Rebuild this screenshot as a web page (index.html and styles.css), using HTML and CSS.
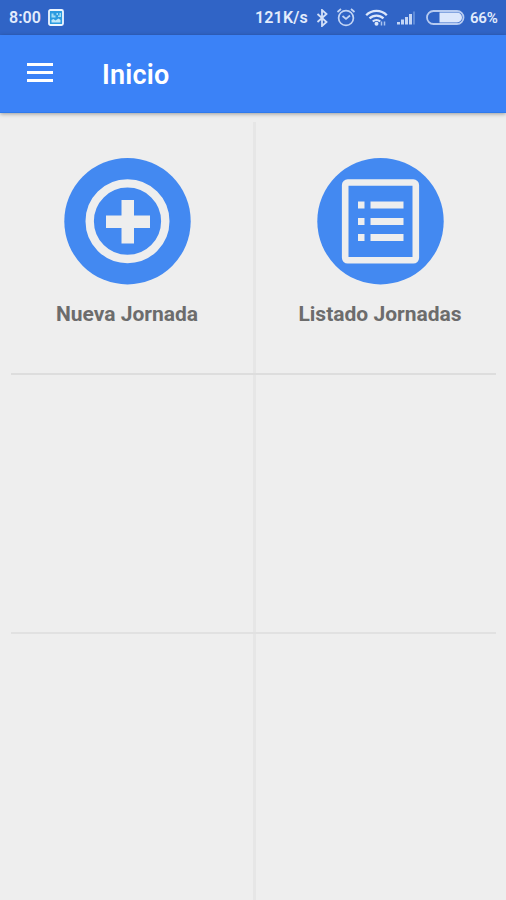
FILE: index.html
```html
<!DOCTYPE html>
<html lang="es">
<head>
  <meta charset="UTF-8">
  <meta name="viewport" content="width=device-width, initial-scale=1.0">
  <title>Inicio</title>
  <link rel="stylesheet" href="styles.css">
</head>
<body>
  <div class="status-bar">
    <span class="time">8:00</span>
    <svg class="photo" width="16" height="17" viewBox="0 0 16 17">
      <rect x="1" y="1" width="14" height="15" rx="1.5" fill="#2b9be0" stroke="#eef6ff" stroke-width="1.8"/>
      <path d="M3.500 4.500h2v2h2v2h-4zM8.500 4h1.500v2h-1.500zM11.500 4h1.500v4h-3v-1.500h1.500z" fill="#9fdcf5"/>
      <path d="M3.500 13.500v-2.500l2-1 2 1.500 3-2 2 1.500v2.500z" fill="#bfe6f8"/>
    </svg>
    <span class="speed">121K/s</span>
    <svg class="bluetooth" width="12" height="18" viewBox="0 0 12 18">
      <path d="M1.500 5l9 8-4.500 4V1l4.500 4-9 8" fill="none" stroke="#d3e0f8" stroke-width="1.800"/>
    </svg>
    <svg class="alarm" width="20" height="20" viewBox="0 0 20 20" fill="none" stroke="#c3d5f5" stroke-width="1.700">
      <circle cx="10" cy="10" r="7.400"/>
      <path d="M6.500 8l3.500 3 4-3.500M1.500 4l3.500-3M18.500 4l-3.500-3"/>
    </svg>
    <svg class="wifi" width="24" height="18" viewBox="0 0 24 18">
      <g fill="none" stroke="#dce7fb" stroke-width="2.300">
        <path d="M1.200 6.200a14.500 14.500 0 0 1 20.600 0"/>
        <path d="M4.500 9.400a10 10 0 0 1 14 0"/>
        <path d="M7.800 12.500a5.500 5.500 0 0 1 7.400 0"/>
      </g>
      <circle cx="11.500" cy="14.800" r="2" fill="#dce7fb"/>
      <path d="M16.500 12.500v4M19.500 12.500v4" stroke="#a9c3f0" stroke-width="1.500"/>
    </svg>
    <svg class="signal" width="19" height="15" viewBox="0 0 19 15" fill="#c3d5f5">
      <rect x="0" y="12" width="3" height="2.500"/>
      <rect x="4" y="9.500" width="3" height="5"/>
      <rect x="8" y="7" width="3" height="7.500"/>
      <rect x="12" y="4" width="3" height="10.500"/>
      <rect x="16" y="1.500" width="2" height="13" fill="#5f8bd8"/>
    </svg>
    <svg class="battery" width="39" height="15" viewBox="0 0 39 15">
      <rect x="1" y="1" width="36.500" height="13" rx="6.500" fill="none" stroke="#b7cbf1" stroke-width="1.800"/>
      <path d="M13.500 2.500H31a5 5 0 0 1 0 10H13.500z" fill="#dce7fc"/>
    </svg>
    <span class="percent">66%</span>
  </div>

  <header class="app-bar">
    <button class="menu" aria-label="Menu">
      <span></span>
      <span></span>
      <span></span>
    </button>
    <h1>Inicio</h1>
  </header>

  <main class="tiles">
    <div class="row first">
      <a class="tile">
        <svg width="127" height="127" viewBox="0 0 127 127">
          <circle cx="63.500" cy="63.200" r="63.200" fill="#4389f1"/>
          <circle cx="63.500" cy="63.200" r="37.800" fill="none" stroke="#eeeeee" stroke-width="8.400"/>
          <path d="M57.500 42h12.500v15.500h16v12.500h-16v15.500h-12.500v-15.500h-15.500v-12.500h15.500z" fill="#eeeeee"/>
        </svg>
        <span>Nueva Jornada</span>
      </a>
      <a class="tile">
        <svg width="127" height="127" viewBox="0 0 127 127">
          <circle cx="63.500" cy="63.200" r="63.200" fill="#4389f1"/>
          <rect x="28.200" y="24.500" width="70.600" height="77.800" rx="2.500" fill="none" stroke="#eeeeee" stroke-width="6.600"/>
          <g fill="#eeeeee">
            <rect x="41" y="43.500" width="6.500" height="7"/>
            <rect x="53.500" y="43.500" width="33" height="7"/>
            <rect x="41" y="60" width="6.500" height="7"/>
            <rect x="53.500" y="60" width="33" height="7"/>
            <rect x="41" y="76" width="6.500" height="7"/>
            <rect x="53.500" y="76" width="33" height="7"/>
          </g>
        </svg>
        <span>Listado Jornadas</span>
      </a>
    </div>
    <div class="row second">
      <div class="tile"></div>
      <div class="tile"></div>
    </div>
    <div class="row last">
      <div class="tile"></div>
      <div class="tile"></div>
    </div>
  </main>
</body>
</html>
```
FILE: styles.css
```css
* {
  box-sizing: border-box;
}
body {
  margin: 0;
  height: 100vh;
  display: flex;
  flex-direction: column;
  overflow: hidden;
  background: #eeeeee;
  font-family: Roboto, sans-serif;
}
.status-bar {
  flex: none;
  display: flex;
  align-items: center;
  height: 35px;
  padding: 0 7px 0 9px;
  background: #3064c6;
  color: #e3ecfc;
  font-size: 16px;
  font-weight: 600;
  white-space: nowrap;
}
.status-bar svg {
  flex: none;
}
.time {
  width: 32px;
}
.photo {
  margin-left: 7px;
}
.speed {
  margin-left: auto;
  letter-spacing: 0.2px;
}
.bluetooth {
  margin-left: 8px;
}
.alarm {
  margin-left: 8px;
}
.wifi {
  margin-left: 9px;
}
.signal {
  margin-left: 8px;
}
.battery {
  margin-left: 10px;
}
.percent {
  width: 29px;
  margin-left: 5px;
  font-size: 15px;
  letter-spacing: -0.2px;
}
.app-bar {
  flex: none;
  display: flex;
  align-items: center;
  height: 78px;
  padding-left: 27px;
  background: #3b82f7;
  border-bottom: 1px solid #2f7aec;
  box-shadow: 0 1px 4px rgba(0,0,0,0.35);
}
.menu {
  display: flex;
  flex-direction: column;
  gap: 5px;
  width: 26px;
  margin-bottom: 2px;
  padding: 0;
  border: none;
  background: none;
}
.menu span {
  height: 3px;
  background: #ffffff;
}
h1 {
  margin: 3px 0 0 49px;
  font-size: 27px;
  font-weight: 600;
  letter-spacing: 0.2px;
  color: #ffffff;
}
.tiles {
  flex: 1;
  display: flex;
  flex-direction: column;
  margin-top: 9px;
}
.row {
  position: relative;
  display: flex;
}
.first {
  height: 253px;
}
.second {
  height: 259px;
}
.last {
  flex: 1;
}
.first::after,
.second::after {
  content: "";
  position: absolute;
  left: 11px;
  right: 10px;
  bottom: 0;
  height: 2px;
  background: #dddddd;
}
.second::after {
  background: #e1e1e1;
}
.tile {
  flex: 1;
  display: flex;
  flex-direction: column;
  align-items: center;
  padding: 36px 2px 0 0;
  color: #6c6c6c;
  font-size: 21px;
  font-weight: 700;
}
.tile:first-child {
  flex: none;
  width: 256px;
  padding: 36px 0 0 1px;
  border-right: 3px solid #e6e6e6;
}
.tile span {
  margin-top: 17px;
}
```
